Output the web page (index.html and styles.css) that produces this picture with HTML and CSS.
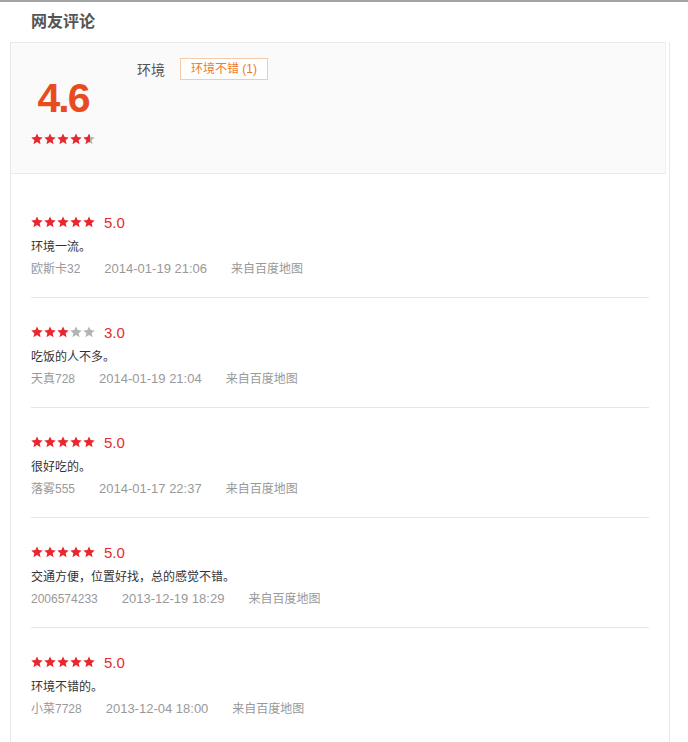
FILE: index.html
```html
<!DOCTYPE html>
<html lang="zh-CN">
<head>
<meta charset="utf-8">
<title>网友评论</title>
<link rel="stylesheet" href="styles.css">
</head>
<body>
<svg width="0" height="0" class="defs" aria-hidden="true">
  <defs>
    <symbol id="star" viewBox="0 0 12 12">
      <polygon points="6,0.4 7.65,4.1 11.7,4.5 8.65,7.2 9.55,11.2 6,9.1 2.45,11.2 3.35,7.2 0.3,4.5 4.35,4.1"/>
    </symbol>
    <linearGradient id="part" x1="0" x2="1" y1="0" y2="0">
      <stop offset="0.58" stop-color="#e8282e"/>
      <stop offset="0.58" stop-color="#b4b4b4"/>
    </linearGradient>
  </defs>
</svg>

<div class="page">
  <h2 class="title">网友评论</h2>
  <div class="box">
    <div class="summary">
      <div class="score">
        <div class="score-num">4.6</div>
        <svg class="stars" width="64" height="12" viewBox="0 0 64 12">
          <use href="#star" x="0" width="12" height="12" class="on"/>
          <use href="#star" x="13" width="12" height="12" class="on"/>
          <use href="#star" x="26" width="12" height="12" class="on"/>
          <use href="#star" x="39" width="12" height="12" class="on"/>
          <polygon fill="url(#part)" transform="translate(52 0)" points="6,0.4 7.65,4.1 11.7,4.5 8.65,7.2 9.55,11.2 6,9.1 2.45,11.2 3.35,7.2 0.3,4.5 4.35,4.1"/>
        </svg>
      </div>
      <div class="tags">
        <span class="tag-label">环境</span>
        <span class="tag">环境不错 (1)</span>
      </div>
    </div>

    <ul class="reviews">
      <li class="review">
        <div class="rate">
          <svg class="stars" width="64" height="12" viewBox="0 0 64 12">
            <use href="#star" x="0" width="12" height="12" class="on"/>
            <use href="#star" x="13" width="12" height="12" class="on"/>
            <use href="#star" x="26" width="12" height="12" class="on"/>
            <use href="#star" x="39" width="12" height="12" class="on"/>
            <use href="#star" x="52" width="12" height="12" class="on"/>
          </svg>
          <span class="rate-num">5.0</span>
        </div>
        <p class="comment">环境一流。</p>
        <div class="meta"><span class="user">欧斯卡32</span><span class="date">2014-01-19 21:06</span><span class="src">来自百度地图</span></div>
      </li>
      <li class="review">
        <div class="rate">
          <svg class="stars" width="64" height="12" viewBox="0 0 64 12">
            <use href="#star" x="0" width="12" height="12" class="on"/>
            <use href="#star" x="13" width="12" height="12" class="on"/>
            <use href="#star" x="26" width="12" height="12" class="on"/>
            <use href="#star" x="39" width="12" height="12" class="off"/>
            <use href="#star" x="52" width="12" height="12" class="off"/>
          </svg>
          <span class="rate-num">3.0</span>
        </div>
        <p class="comment">吃饭的人不多。</p>
        <div class="meta"><span class="user">天真728</span><span class="date">2014-01-19 21:04</span><span class="src">来自百度地图</span></div>
      </li>
      <li class="review">
        <div class="rate">
          <svg class="stars" width="64" height="12" viewBox="0 0 64 12">
            <use href="#star" x="0" width="12" height="12" class="on"/>
            <use href="#star" x="13" width="12" height="12" class="on"/>
            <use href="#star" x="26" width="12" height="12" class="on"/>
            <use href="#star" x="39" width="12" height="12" class="on"/>
            <use href="#star" x="52" width="12" height="12" class="on"/>
          </svg>
          <span class="rate-num">5.0</span>
        </div>
        <p class="comment">很好吃的。</p>
        <div class="meta"><span class="user">落雾555</span><span class="date">2014-01-17 22:37</span><span class="src">来自百度地图</span></div>
      </li>
      <li class="review">
        <div class="rate">
          <svg class="stars" width="64" height="12" viewBox="0 0 64 12">
            <use href="#star" x="0" width="12" height="12" class="on"/>
            <use href="#star" x="13" width="12" height="12" class="on"/>
            <use href="#star" x="26" width="12" height="12" class="on"/>
            <use href="#star" x="39" width="12" height="12" class="on"/>
            <use href="#star" x="52" width="12" height="12" class="on"/>
          </svg>
          <span class="rate-num">5.0</span>
        </div>
        <p class="comment">交通方便，位置好找，总的感觉不错。</p>
        <div class="meta"><span class="user">2006574233</span><span class="date">2013-12-19 18:29</span><span class="src">来自百度地图</span></div>
      </li>
      <li class="review">
        <div class="rate">
          <svg class="stars" width="64" height="12" viewBox="0 0 64 12">
            <use href="#star" x="0" width="12" height="12" class="on"/>
            <use href="#star" x="13" width="12" height="12" class="on"/>
            <use href="#star" x="26" width="12" height="12" class="on"/>
            <use href="#star" x="39" width="12" height="12" class="on"/>
            <use href="#star" x="52" width="12" height="12" class="on"/>
          </svg>
          <span class="rate-num">5.0</span>
        </div>
        <p class="comment">环境不错的。</p>
        <div class="meta"><span class="user">小菜7728</span><span class="date">2013-12-04 18:00</span><span class="src">来自百度地图</span></div>
      </li>
    </ul>
  </div>
</div>
</body>
</html>
```

FILE: styles.css
```css
html, body {
  margin: 0;
  padding: 0;
  background: #fff;
}

body {
  font-family: "Liberation Sans", "Noto Sans CJK SC", Arial, sans-serif;
  color: #333;
  border-top: 2px solid #a3a3a3;
}

.defs {
  position: absolute;
  width: 0;
  height: 0;
  overflow: hidden;
}

.page {
  width: 688px;
}

.title {
  margin: 0;
  height: 40px;
  line-height: 40px;
  padding-left: 31px;
  font-size: 16px;
  font-weight: bold;
  color: #555;
}

.box {
  margin-left: 10px;
  width: 658px;
  border-left: 1px solid #e8e8e8;
  border-right: 1px solid #e8e8e8;
}

.summary {
  display: flex;
  align-items: flex-start;
  margin-right: 3px;
  padding: 15px 0 28px 20px;
  background: #fafafa;
  border-top: 1px solid #ebebeb;
  border-bottom: 1px solid #ebebeb;
  border-right: 1px solid #f0f0f0;
}

.score {
  width: 64px;
  margin-top: 20px;
  text-align: center;
}

.score-num {
  height: 41px;
  line-height: 41px;
  font-size: 41px;
  font-weight: bold;
  letter-spacing: -2px;
  color: #e84c1e;
  font-family: "Liberation Sans", Arial, sans-serif;
}

.stars {
  display: block;
}

.score .stars {
  margin-top: 14px;
}

.stars .on {
  fill: #e8282e;
}

.stars .off {
  fill: #b4b4b4;
}

.tags {
  display: flex;
  align-items: center;
  margin-left: 42px;
}

.tag-label {
  font-size: 14px;
  color: #555;
  margin-right: 15px;
}

.tag {
  font-size: 12px;
  line-height: 20px;
  padding: 0 10px;
  color: #f07a2c;
  background: #fff;
  border: 1px solid #f8cba8;
}

.reviews {
  list-style: none;
  margin: 0;
  padding: 14px 20px 40px 20px;
}

.review {
  padding: 24px 0 17px 0;
}

.review + .review {
  border-top: 1px solid #e6e6e6;
}

.rate {
  display: flex;
  align-items: center;
  height: 20px;
}

.rate-num {
  margin-left: 9px;
  font-size: 15px;
  color: #e62a2e;
}

.comment {
  margin: 4px 0 0 0;
  font-size: 12px;
  line-height: 22px;
  color: #333;
}

.meta {
  display: flex;
  align-items: baseline;
  line-height: 22px;
  color: #999;
}

.user {
  font-size: 12px;
  margin-right: 24px;
}

.date {
  font-size: 13px;
  margin-right: 24px;
}

.src {
  font-size: 12px;
}
```
